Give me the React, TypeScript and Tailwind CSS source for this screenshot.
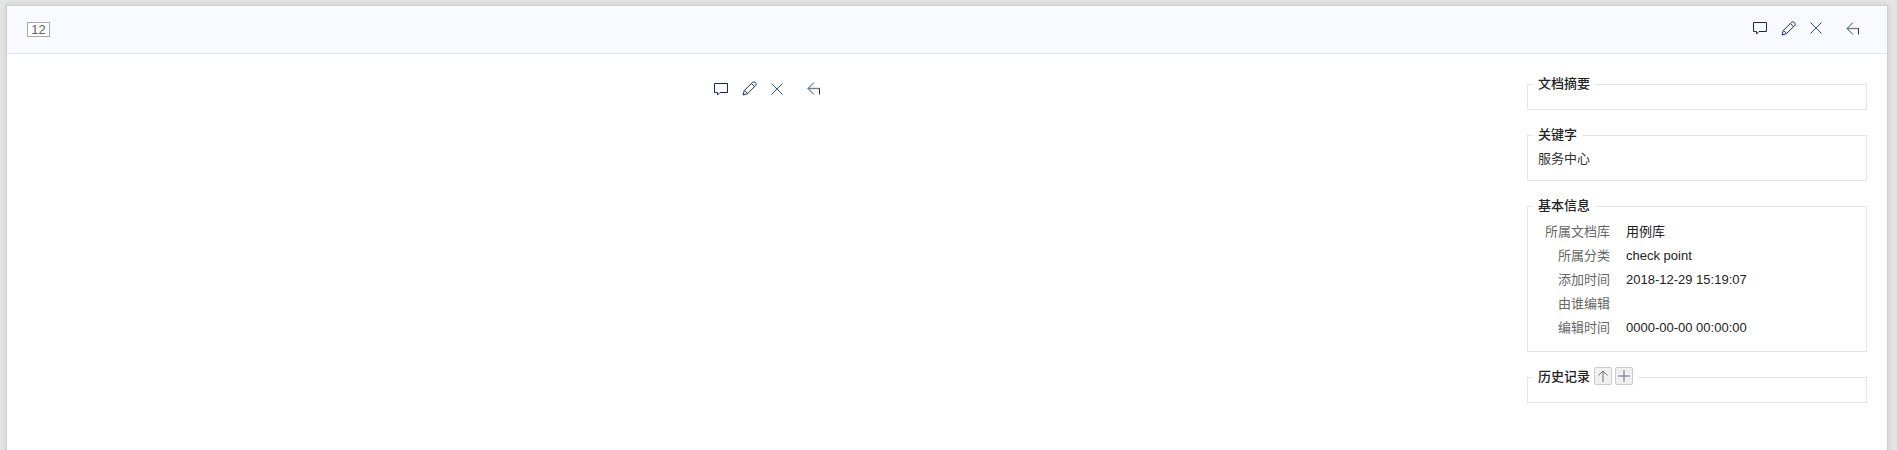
const Comment = () => (
  <svg width="15" height="14" viewBox="0 0 15 14" fill="none" stroke="#14295c" strokeWidth="1">
    <path d="M1.5 1.5H14.5V10.5H7L4.5 13V10.5H1.5Z" />
  </svg>
);
const Pencil = () => (
  <svg width="15" height="15" viewBox="0 0 15 15" fill="none" stroke="#1c2f58" strokeWidth="1">
    <path d="M1 14L2.3 9.5L10.5 1.3C11.5 0.6 13 0.8 13.7 1.8C14.3 2.8 14.1 3.8 13.6 4.6L5.5 12.7Z" />
    <path d="M9.5 2.6L12.4 5.6M2.6 9.4L5.5 12.4" />
  </svg>
);
const Close = () => (
  <svg width="12" height="12" viewBox="0 0 12 12" fill="none" stroke="#2a5a85" strokeWidth="1">
    <path d="M0.5 0.5L11.5 11.5M11.5 0.5L0.5 11.5" />
  </svg>
);
const Back = () => (
  <svg width="14" height="13" viewBox="0 0 14 13" fill="none" strokeWidth="1">
    <path d="M7 0.5L1 6.5L7 12.5" stroke="#1f4f7c" />
    <path d="M1 6.5H13" stroke="#6f7a8c" strokeWidth="1.4" />
    <path d="M12.5 6.5V12.5" stroke="#2f2470" />
  </svg>
);

const Actions = () => (
  <div className="flex items-center">
    <span className="flex w-[15px] justify-center"><Comment /></span>
    <span className="ml-[14px] flex w-[15px] justify-center"><Pencil /></span>
    <span className="ml-[14px] flex w-[12px] justify-center"><Close /></span>
    <span className="ml-[24px] flex w-[14px] justify-center"><Back /></span>
  </div>
);

const rows = [
  ["所属文档库", "用例库"],
  ["所属分类", "check point"],
  ["添加时间", "2018-12-29 15:19:07"],
  ["由谁编辑", ""],
  ["编辑时间", "0000-00-00 00:00:00"],
];

const legendClass = "ml-[5px] flex h-[21px] items-center px-[5px] pb-[2px] text-[13px] font-medium leading-[19px] text-[#222]";

export default function App() {
  return (
    <div
      className="h-[450px] overflow-hidden bg-[#e5e5e5] pl-[6px] pr-[9px] pt-[5px] text-[13px] text-[#333]"
      style={{ fontFamily: '"Liberation Sans","Noto Sans CJK SC",sans-serif' }}
    >
      <div className="h-[460px] border border-[#cfcfcf] bg-white shadow-[0_0_6px_rgba(0,0,0,0.12)]">
        <header className="flex h-[48px] items-center justify-between border-b border-[#e0e2e8] bg-[#f9faff] pl-[20px] pr-[27px]">
          <span className="flex h-[15px] w-[23px] items-center justify-center border border-[#aaa] bg-white text-[13px] leading-none text-[#666]">12</span>
          <div className="-mt-[3px]"><Actions /></div>
        </header>
        <div className="flex">
          <main className="flex flex-1 justify-center pt-[27px]">
            <div className="h-[16px]"><Actions /></div>
          </main>
          <aside className="flex w-[360px] flex-col gap-[15px] pr-[20px] pt-[20px]">
            <fieldset className="border border-[#e5e5e5] pb-[14px]">
              <legend className={legendClass}>文档摘要</legend>
            </fieldset>
            <fieldset className="border border-[#e5e5e5] pb-[9px] pt-px">
              <legend className={legendClass}>关键字</legend>
              <div className="pl-[10px] leading-[24px] text-[#333]">服务中心</div>
            </fieldset>
            <fieldset className="border border-[#e5e5e5] pb-[11px] pt-[3px]">
              <legend className={legendClass}>基本信息</legend>
              {rows.map(([k, v]) => (
                <div key={k} className="flex h-[24px] items-center">
                  <span className="w-[82px] text-right text-[#666]">{k}</span>
                  <span className="ml-[16px] text-[#222]">{v}</span>
                </div>
              ))}
            </fieldset>
            <fieldset className="border border-[#e5e5e5] pb-[14px]">
              <legend className={legendClass}>
                <span>历史记录</span>
                <span className="-mt-[1px] ml-[4px] flex h-[18px] w-[18px] items-center justify-center rounded-[2px] border border-[#ccc] bg-[#f0f0f0]">
                  <svg width="12" height="12" viewBox="0 0 12 12" fill="none" stroke="#6b6f80"><path d="M6 12V1M1.5 5.5L6 1L10.5 5.5" /></svg>
                </span>
                <span className="-mt-[1px] ml-[3px] flex h-[18px] w-[18px] items-center justify-center rounded-[2px] border border-[#ccc] bg-[#f0f0f0]">
                  <svg width="12" height="12" viewBox="0 0 12 12" fill="none" stroke="#6b6f80"><path d="M6 0V12M0 6H12" /></svg>
                </span>
              </legend>
            </fieldset>
          </aside>
        </div>
      </div>
    </div>
  );
}
